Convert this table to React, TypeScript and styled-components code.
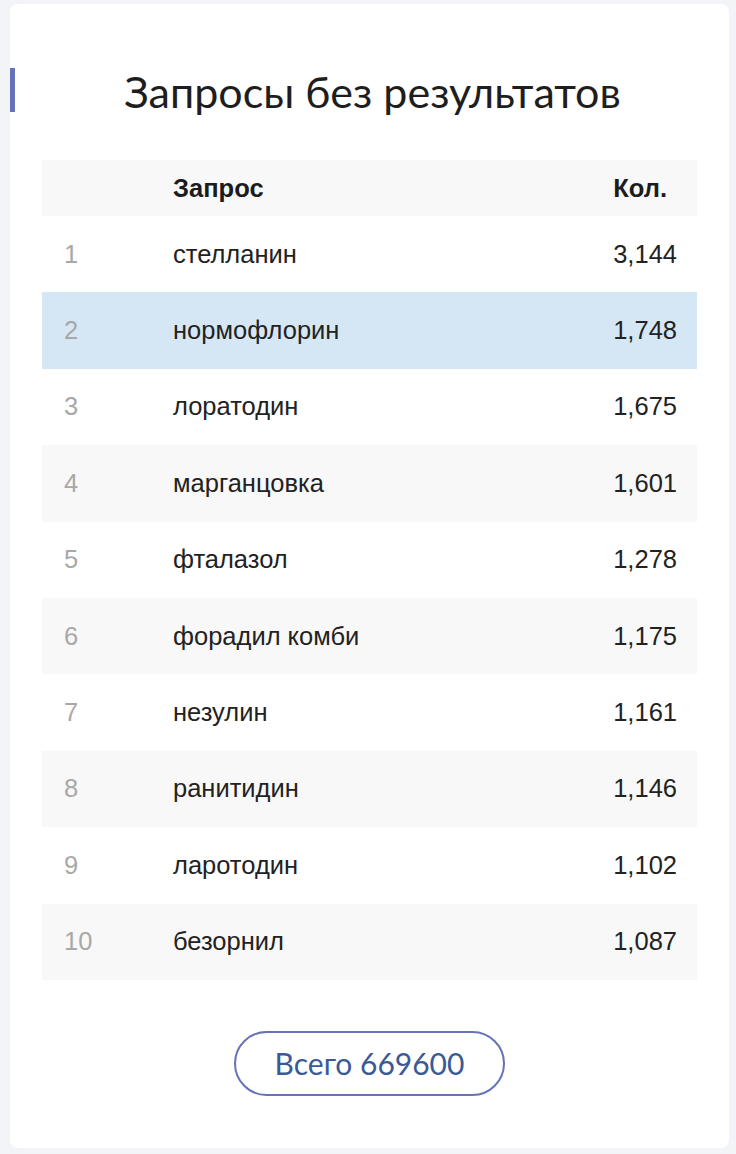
import React from "react";
import styled, { createGlobalStyle } from "styled-components";

const Global = createGlobalStyle`
  html, body { margin: 0; padding: 0; background: #f3f4f8; }
  body { padding: 4px 7px 7px 10px; font-family: "Liberation Sans", Arial, sans-serif; }
`;

const Card = styled.div`
  background: #ffffff;
  border-radius: 8px;
  padding: 0 32px 52px 32px;
  display: flex;
  flex-direction: column;
  align-items: stretch;
  min-height: 1143px;
  box-sizing: border-box;
  position: relative;
`;

const TitleRow = styled.div`
  position: relative;
  display: flex;
  justify-content: center;
  padding: 66px 0 46px 6px;
`;

const Accent = styled.span`
  position: absolute;
  left: -32px;
  top: 64px;
  width: 5px;
  height: 44px;
  background: #6673b8;
`;

const Title = styled.h1`
  margin: 0;
  font-family: Lato, "Open Sans", sans-serif;
  font-weight: 400;
  font-size: 43px;
  line-height: 44px;
  color: #1e1e1e;
`;

const Table = styled.div`
  display: flex;
  flex-direction: column;
`;

const Row = styled.div<{ $bg: string; $h: number }>`
  display: grid;
  grid-template-columns: 109px 1fr auto;
  align-items: center;
  height: ${(p) => p.$h}px;
  padding: 0 20px 0 22px;
  background: ${(p) => p.$bg};
  font-size: 25.5px;
  color: #222;
`;

const HeadCell = styled.div<{ $end?: boolean }>`
  font-weight: 700;
  color: #1c1c1c;
  padding-right: ${(p) => (p.$end ? "10px" : "0")};
`;

const Num = styled.div`
  color: #a8a8a8;
`;

const Cell = styled.div``;

const Footer = styled.div`
  display: flex;
  justify-content: center;
  padding-top: 51px;
`;

const TotalButton = styled.button`
  width: 271px;
  height: 65px;
  border: 2px solid #6673b8;
  border-radius: 33px;
  background: #fff;
  color: #395a96;
  font-family: Lato, "Open Sans", sans-serif;
  font-size: 30px;
  cursor: pointer;
`;

const rows: [string, string][] = [
  ["стелланин", "3,144"],
  ["нормофлорин", "1,748"],
  ["лоратодин", "1,675"],
  ["марганцовка", "1,601"],
  ["фталазол", "1,278"],
  ["форадил комби", "1,175"],
  ["незулин", "1,161"],
  ["ранитидин", "1,146"],
  ["ларотодин", "1,102"],
  ["безорнил", "1,087"],
];

const rowBg = (i: number) => {
  if (i === 1) return "#d5e7f5";
  return i % 2 === 1 ? "#f8f8f8" : "#ffffff";
};

export default function App() {
  return (
    <>
      <Global />
      <Card>
        <TitleRow>
          <Accent />
          <Title>Запросы без результатов</Title>
        </TitleRow>
        <Table>
          <Row $bg="#f8f8f8" $h={56}>
            <HeadCell />
            <HeadCell>Запрос</HeadCell>
            <HeadCell $end>Кол.</HeadCell>
          </Row>
          {rows.map(([q, n], i) => (
            <Row key={q} $bg={rowBg(i)} $h={76.4}>
              <Num>{i + 1}</Num>
              <Cell>{q}</Cell>
              <Cell>{n}</Cell>
            </Row>
          ))}
        </Table>
        <Footer>
          <TotalButton>Всего 669600</TotalButton>
        </Footer>
      </Card>
    </>
  );
}
